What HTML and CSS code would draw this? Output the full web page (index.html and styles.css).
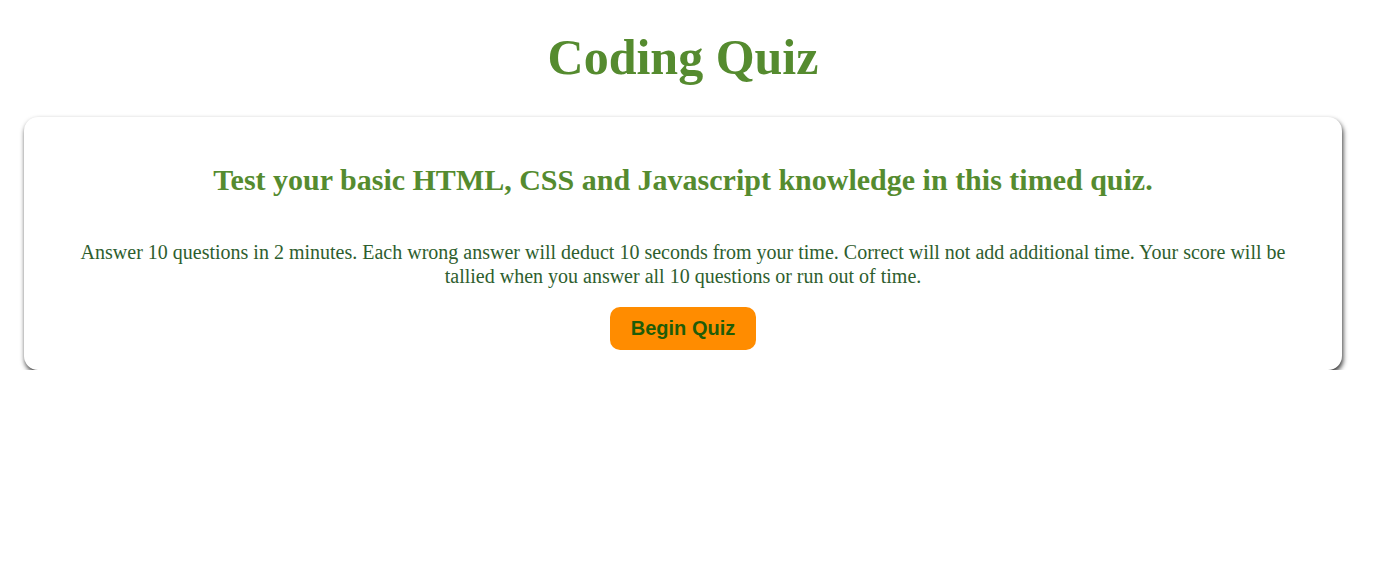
FILE: index.html
```html
<!DOCTYPE html>
<html>
<head>
<meta charset="utf-8">
<title>Coding Quiz</title>
<link rel="stylesheet" href="styles.css">
</head>
<body>
<header class="header">
  <h1 class="title">Coding Quiz</h1>
</header>
<main class="card">
  <h2 class="subtitle">Test your basic HTML, CSS and Javascript knowledge in this timed quiz.</h2>
  <p class="intro">Answer 10 questions in 2 minutes. Each wrong answer will deduct 10 seconds from your time. Correct will not add additional time. Your score will be tallied when you answer all 10 questions or run out of time.</p>
  <button class="start-btn">Begin Quiz</button>
</main>
</body>
</html>
```
FILE: styles.css
```css
html, body {
  background: #ffffff;
}
body {
  margin: 8px 25px 8px 8px;
  font-family: "Liberation Serif", "Times New Roman", serif;
}
.header {
  display: flex;
  justify-content: center;
}
.title {
  margin: 21px 0 0;
  font-size: 50px;
  line-height: 57px;
  font-weight: bold;
  color: #558b2f;
}
.card {
  margin: 31px 16px 0;
  padding: 46px 40px 20px;
  border-radius: 14px;
  background: #fff;
  box-shadow: 1px 3px 5px rgba(0, 0, 0, 0.8);
  display: flex;
  flex-direction: column;
  align-items: center;
  text-align: center;
}
.subtitle {
  margin: 0;
  font-size: 30px;
  line-height: 34px;
  font-weight: bold;
  color: #558b2f;
}
.intro {
  margin: 43px 0 0;
  font-size: 20px;
  line-height: 24px;
  color: #2e5e2e;
}
.start-btn {
  margin-top: 19px;
  padding: 0 21px;
  height: 43px;
  border: none;
  border-radius: 10px;
  background: #ff8c00;
  color: #1f5c08;
  font-family: "Liberation Sans", Arial, sans-serif;
  font-size: 20px;
  font-weight: bold;
}
```
